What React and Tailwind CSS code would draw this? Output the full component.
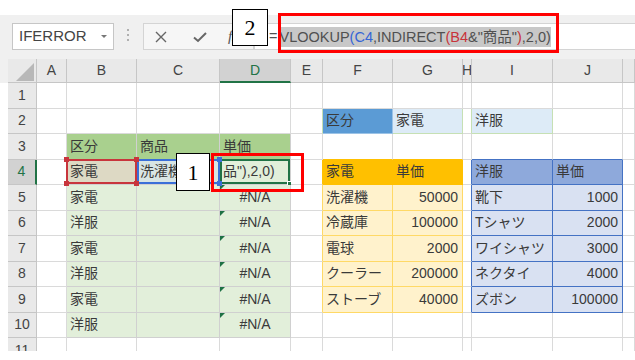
import React from 'react';

const W = ['w-[30px]', 'w-[70px]', 'w-[83px]', 'w-[71px]', 'w-[32px]', 'w-[70px]', 'w-[70px]', 'w-[9px]', 'w-[81px]', 'w-[70px]', 'w-[12px]'];
const LETTERS = ['A', 'B', 'C', 'D', 'E', 'F', 'G', 'H', 'I', 'J', ''];

const GREEN_H = { bg: 'bg-[#a9d08e]', bd: 'border-[#d0d0d0]' };
const GREEN = { bg: 'bg-[#e2efda]', bd: 'border-[#d0d0d0]' };
const ORANGE_H = { bg: 'bg-[#ffc000]', bd: 'border-[#ffc000]' };
const ORANGE = { bg: 'bg-[#fff2cc]', bd: 'border-[#ffd966]' };
const BLUE_H = { bg: 'bg-[#8ea9db]', bd: 'border-[#4472c4]' };
const BLUE = { bg: 'bg-[#d9e1f2]', bd: 'border-[#4472c4]' };
const SKY = { bg: 'bg-[#ddebf7]', bd: 'border-[#c6e0b4]' };

const goods = [
  ['家電', '洗濯機', '50000', '靴下', '1000'],
  ['洋服', '冷蔵庫', '100000', 'Tシャツ', '2000'],
  ['家電', '電球', '2000', 'ワイシャツ', '3000'],
  ['洋服', 'クーラー', '200000', 'ネクタイ', '4000'],
  ['家電', 'ストーブ', '40000', 'ズボン', '100000'],
];

function buildRows() {
  const rows = [];
  rows.push({ n: 1, cells: [] });
  rows.push({
    n: 2,
    cells: [null, null, null, null, { bd: 'border-r-[#c6e0b4] border-b-[#dadada]' },
      { t: '区分', bg: 'bg-[#5b9bd5]', bd: 'border-[#9cc3e6]' }, { t: '家電', ...SKY }, { bd: 'border-r-[#c6e0b4] border-b-[#dadada]' }, { t: '洋服', ...SKY }],
  });
  rows.push({
    n: 3,
    cells: [null, { t: '区分', ...GREEN_H }, { t: '商品', ...GREEN_H }, { t: '単価', ...GREEN_H }, null,
      { bd: 'border-b-[#ffc000] border-r-[#dadada]' }, { bd: 'border-b-[#ffc000] border-r-[#dadada]' }, null,
      { bd: 'border-b-[#4472c4] border-r-[#dadada]' }, { bd: 'border-b-[#4472c4] border-r-[#dadada]' }],
  });
  rows.push({ n: 4 });
  goods.forEach((g, i) => {
    rows.push({
      n: 5 + i,
      cells: [null, { t: g[0], ...GREEN }, { ...GREEN }, { t: '#N/A', center: true, err: true, ...GREEN },
        { bd: 'border-r-[#ffd966] border-b-[#dadada]' },
        { t: g[1], ...ORANGE }, { t: g[2], right: true, ...ORANGE },
        { bd: 'border-r-[#4472c4] border-b-[#dadada]' },
        { t: g[3], ...BLUE }, { t: g[4], right: true, ...BLUE }],
    });
  });
  rows.push({ n: 10, cells: [null, { t: '洋服', ...GREEN }, { ...GREEN }, { t: '#N/A', center: true, err: true, ...GREEN }] });
  rows.push({ n: 11, cells: [] });
  return rows;
}

function Cell({ w, c }) {
  const cc = c || {};
  const align = cc.right ? 'justify-end pr-[4px]' : cc.center ? 'justify-center' : 'pl-[3px]';
  return (
    <div className={`${w} shrink-0 h-full relative flex items-center overflow-hidden whitespace-nowrap border-r border-b text-[14px] text-[#3a3a3a] ${cc.bg || 'bg-white'} ${cc.bd || 'border-[#dadada]'} ${align}`}>
      {cc.err && <span className="absolute top-0 left-0 w-0 h-0 border-t-[5px] border-r-[5px] border-t-[#1e7145] border-r-transparent" />}
      {cc.t}
    </div>
  );
}

function RowHead({ n, active }) {
  return (
    <div className={`w-[29px] shrink-0 h-full flex items-center justify-center text-[14px] border-b ${active ? 'bg-[#d2d2d2] text-[#217346] border-r-2 border-r-[#217346] border-b-[#c6c6c6]' : 'bg-[#e9e9e9] text-[#444] border-r border-[#c6c6c6]'}`}>
      {n}
    </div>
  );
}

function Row({ r }) {
  return (
    <div className="flex h-[25.5px]">
      <div className="w-[8px] shrink-0 bg-white" />
      <RowHead n={r.n} />
      {W.map((w, i) => <Cell key={i} w={w} c={r.cells[i]} />)}
    </div>
  );
}

function Handle({ cls }) {
  return <span className={`absolute z-10 w-[5px] h-[5px] ${cls}`} />;
}

function Row4() {
  return (
    <div className="flex h-[25.5px]">
      <div className="w-[8px] shrink-0 bg-white" />
      <RowHead n={4} active />
      <Cell w={W[0]} />
      <div className={`${W[1]} shrink-0 h-full relative flex items-center pl-[3px] border-r border-b border-[#d0d0d0] bg-[#ddd9c4] text-[14px] text-[#3a3a3a] whitespace-nowrap`}>
        家電
        <span className="absolute -left-px -top-px w-[calc(100%+2px)] h-[calc(100%+1px)] border-2 border-[#c8353c]" />
        <Handle cls="bg-[#c8353c] -left-[3px] -top-[3px]" />
        <Handle cls="bg-[#c8353c] -right-[3px] -top-[3px]" />
        <Handle cls="bg-[#c8353c] -left-[3px] -bottom-[2px]" />
        <Handle cls="bg-[#c8353c] -right-[3px] -bottom-[2px]" />
      </div>
      <div className={`${W[2]} shrink-0 h-full relative flex items-center pl-[3px] border-r border-b border-[#d0d0d0] bg-[#d8e5e4] text-[14px] text-[#3a3a3a] whitespace-nowrap`}>
        洗濯機
        <span className="absolute left-0 -top-px w-[calc(100%+1px)] h-[calc(100%+1px)] border-2 border-[#3a6fd8]" />
        <Handle cls="bg-[#3a6fd8] -right-[3px] -top-[3px]" />
        <Handle cls="bg-[#3a6fd8] -right-[3px] -bottom-[2px]" />
      </div>
      <div className={`${W[3]} shrink-0 h-full relative flex items-center pl-[3px] border-r border-b border-[#d0d0d0] bg-[#e2efda] text-[14px] text-[#3a3a3a] whitespace-nowrap`}>
        品"),2,0)
        <span className="absolute left-0 -top-px w-full h-[calc(100%+1px)] border-2 border-[#217346]" />
        <span className="absolute -right-[3px] -bottom-[3px] w-[6px] h-[6px] bg-[#217346] border border-white" />
      </div>
      <Cell w={W[4]} c={{ bd: 'border-r-[#ffc000] border-b-[#dadada]' }} />
      <Cell w={W[5]} c={{ t: '家電', ...ORANGE_H }} />
      <Cell w={W[6]} c={{ t: '単価', ...ORANGE_H }} />
      <Cell w={W[7]} c={{ bd: 'border-r-[#4472c4] border-b-[#dadada]' }} />
      <Cell w={W[8]} c={{ t: '洋服', ...BLUE_H }} />
      <Cell w={W[9]} c={{ t: '単価', ...BLUE_H }} />
      <Cell w={W[10]} />
    </div>
  );
}

function FormulaBar() {
  return (
    <div className="h-[44px] bg-[#f0f0f0] flex items-start pt-[8px]">
      <div className="ml-[12px] w-[102px] h-[27px] relative bg-white border border-[#c6c6c6] flex items-center pl-[6px] text-[15px] text-[#444]">
        IFERROR
        <span className="absolute right-[6px] top-[11px] w-0 h-0 border-l-[3px] border-r-[3px] border-t-[3px] border-l-transparent border-r-transparent border-t-[#777]" />
      </div>
      <div className="ml-[13px] mt-[6px] flex flex-col gap-[3px]">
        <span className="w-[2px] h-[2px] bg-[#b0b0b0]" />
        <span className="w-[2px] h-[2px] bg-[#b0b0b0]" />
        <span className="w-[2px] h-[2px] bg-[#b0b0b0]" />
      </div>
      <div className="ml-[14px] w-[111px] h-[27px] bg-[#f6f6f6] border border-[#d4d4d4] flex items-center">
        <svg className="ml-[11px]" width="12" height="12" viewBox="0 0 12 12">
          <path d="M1 1 L11 11 M11 1 L1 11" stroke="#666" strokeWidth="1.4" fill="none" />
        </svg>
        <svg className="ml-[26px]" width="14" height="12" viewBox="0 0 14 12">
          <path d="M1 6.5 L5 10 L13 2" stroke="#666" strokeWidth="2" fill="none" />
        </svg>
        <span className="ml-[21px] font-['Liberation_Serif',serif] italic text-[15px] text-[#555]">fx</span>
      </div>
      <div className="flex-1 h-[27px] bg-white border-y border-l border-[#d4d4d4] flex items-center pl-[14px] text-[14.5px] text-[#505050] whitespace-nowrap">
        <span>=</span>
        <span className="ml-[2px] bg-[#c8c8c8] py-[1px] leading-[18px]">
          VLOOKUP<span className="text-[#3465d6]">(C4</span>,INDIRECT<span className="text-[#c8333a]">(B4</span>&amp;"商品"<span className="text-[#c8333a]">)</span>,2,0)
        </span>
      </div>
    </div>
  );
}

function ColumnHeader() {
  return (
    <div className="flex h-[24px] bg-[#e9e9e9]">
      <div className="w-[8px] shrink-0 bg-[#f0f0f0]" />
      <div className="w-[29px] shrink-0 relative border-r border-b border-[#c6c6c6]">
        <svg className="absolute right-[2px] bottom-[1px]" width="18" height="18" viewBox="0 0 18 18">
          <path d="M18 0 L18 18 L0 18 Z" fill="#b8b8b8" />
        </svg>
      </div>
      {LETTERS.map((l, i) => (
        <div key={i} className={`${W[i]} shrink-0 overflow-hidden flex items-center justify-center text-[14px] border-r border-[#c6c6c6] ${l === 'D' ? 'bg-[#d2d2d2] text-[#217346] border-b-2 border-b-[#217346]' : 'text-[#444] border-b'}`}>
          {l}
        </div>
      ))}
    </div>
  );
}

function NumBox({ cls, n }) {
  return (
    <div className={`absolute bg-white border border-black flex items-center justify-center font-['Liberation_Serif',serif] text-[22px] text-black ${cls}`}>
      {n}
    </div>
  );
}

export default function App() {
  const rows = buildRows();
  return (
    <div className="relative w-[635px] h-[360px] bg-white overflow-hidden font-['Liberation_Sans','Noto_Sans_CJK_JP',sans-serif]">
      <div className="pt-[15px]">
        <FormulaBar />
        <ColumnHeader />
        <div className="h-[268px] overflow-hidden">
          {rows.map(r => (r.n === 4 ? <Row4 key={4} /> : <Row key={r.n} r={r} />))}
        </div>
      </div>
      <NumBox cls="left-[232px] top-[9px] w-[36px] h-[37px]" n="2" />
      <NumBox cls="left-[176px] top-[153px] w-[34px] h-[38px]" n="1" />
      <div className="absolute left-[278px] top-[13px] w-[281px] h-[40px] border-[3px] border-[#ff0000]" />
      <div className="absolute left-[211px] top-[153px] w-[93px] h-[39px] border-[3px] border-[#ff0000]" />
    </div>
  );
}
